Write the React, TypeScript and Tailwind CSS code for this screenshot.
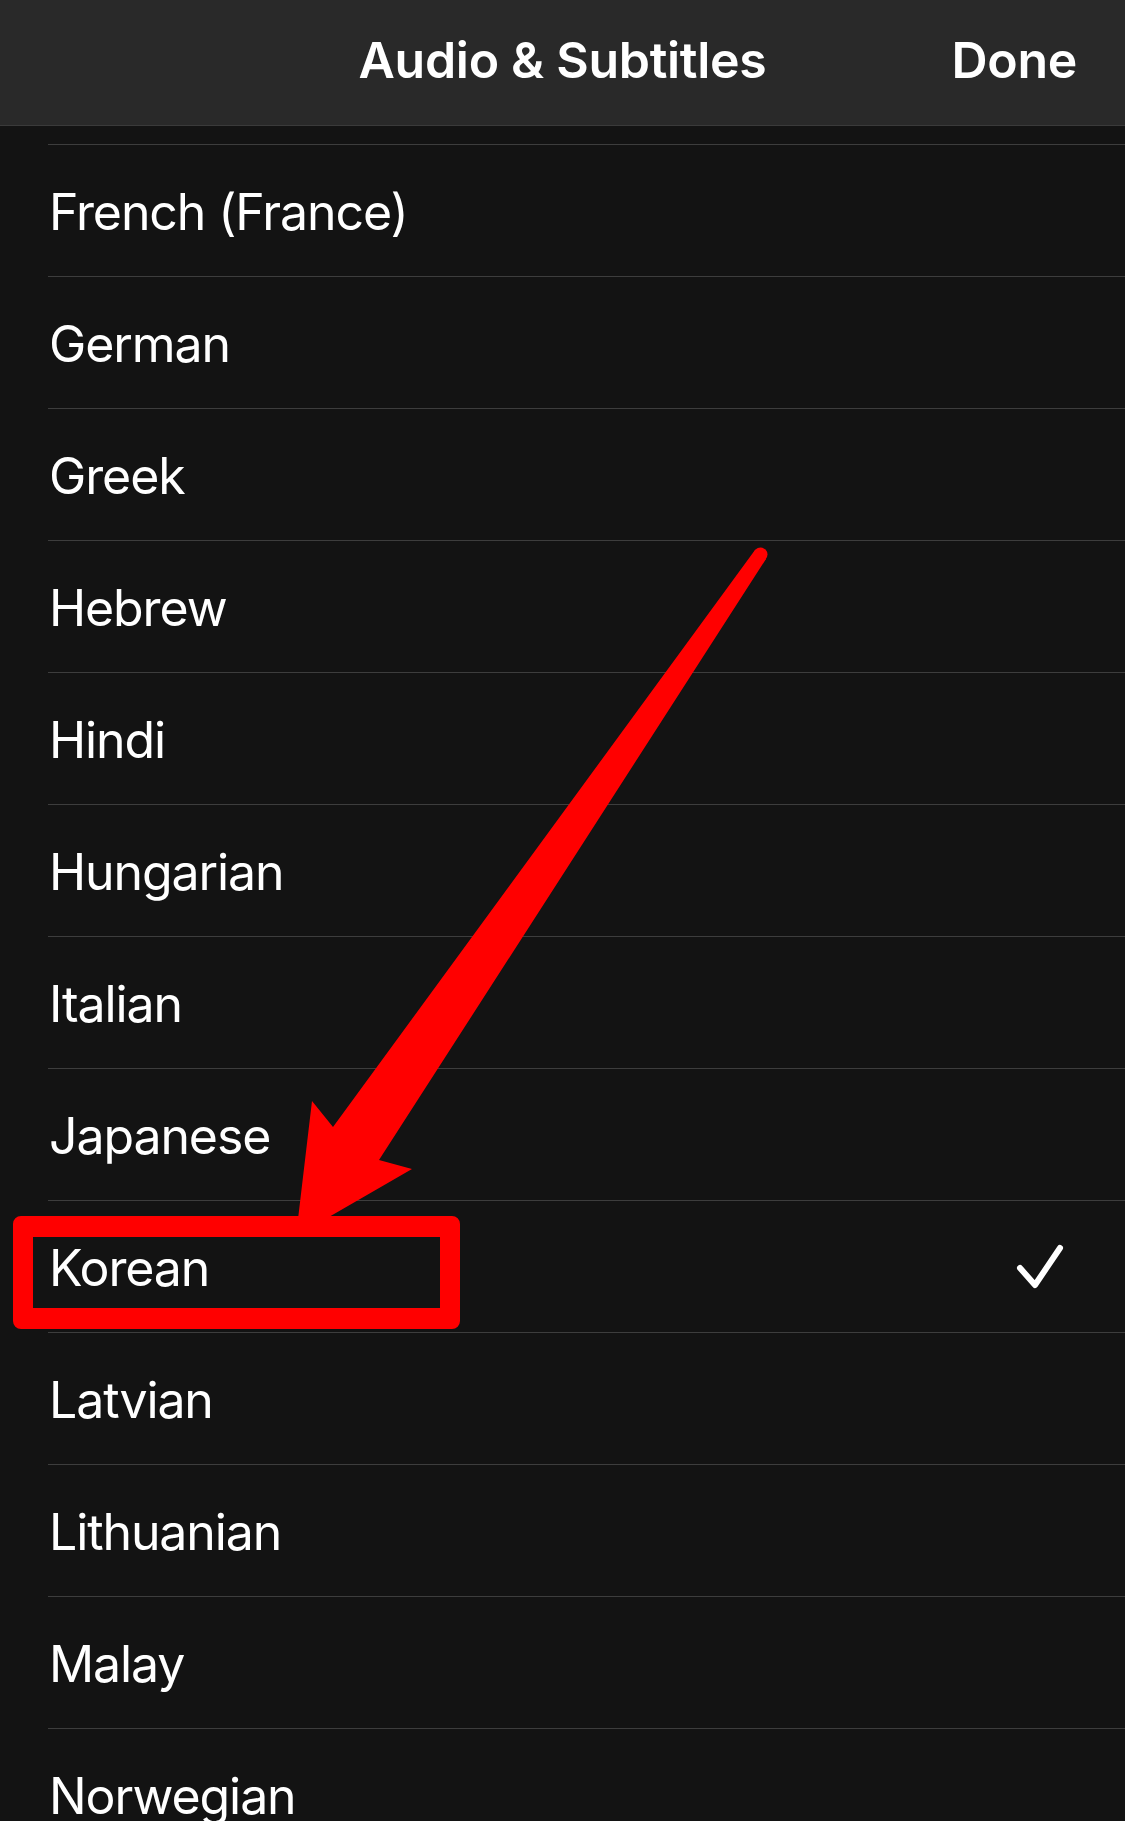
import React from "react";

const languages = [
  "French (France)",
  "German",
  "Greek",
  "Hebrew",
  "Hindi",
  "Hungarian",
  "Italian",
  "Japanese",
  "Korean",
  "Latvian",
  "Lithuanian",
  "Malay",
  "Norwegian",
];

const Check = () => (
  <svg width="52" height="50" viewBox="0 0 52 50" fill="none">
    <path
      d="M6 26 L21 43 L46 6"
      stroke="white"
      strokeWidth="6"
      strokeLinecap="round"
      strokeLinejoin="round"
    />
  </svg>
);

const App = () => {
  return (
    <div
      className="relative w-[1125px] h-[1821px] overflow-hidden bg-[#131313] text-white"
      style={{ fontFamily: "Inter, 'Noto Sans', sans-serif" }}
    >
      {/* nav bar */}
      <div className="grid grid-cols-[1fr_auto_1fr] items-center h-[126px] bg-[#292929] border-b border-[#3a3a3a]">
        <div />
        <h1 className="text-[50px] font-semibold tracking-[-0.3px] pb-[4px]">Audio &amp; Subtitles</h1>
        <div className="flex justify-end pr-[48px] pb-[4px]">
          <span className="text-[50px] font-semibold tracking-[-0.3px]">Done</span>
        </div>
      </div>

      {/* previous row, scrolled out */}
      <div className="h-[18px]" />

      <div className="flex flex-col">
        {languages.map((lang) => (
          <div
            key={lang}
            className="ml-[48px] h-[132px] shrink-0 border-t border-[#3d3d3d] flex items-center justify-between pr-[59px]"
          >
            <span className="text-[50px] tracking-[-1.1px] pl-[1px] pt-[4px]">{lang}</span>
            {lang === "Korean" && <Check />}
          </div>
        ))}
      </div>

      {/* annotation box */}
      <div className="absolute left-[13px] top-[1216px] w-[447px] h-[113px] border-x-[20px] border-y-[21px] border-[#ff0000] rounded-[8px]" />

      {/* annotation arrow */}
      <svg
        className="absolute left-0 top-0 pointer-events-none"
        width="1125"
        height="1821"
        viewBox="0 0 1125 1821"
      >
        <path
          d="M755 550 L333 1127 L312 1101 L296 1236 L412 1169 L379 1160 L766 559 Z"
          fill="#ff0000"
        />
        <circle cx="760.5" cy="554.5" r="7" fill="#ff0000" />
      </svg>
    </div>
  );
};

export default App;
